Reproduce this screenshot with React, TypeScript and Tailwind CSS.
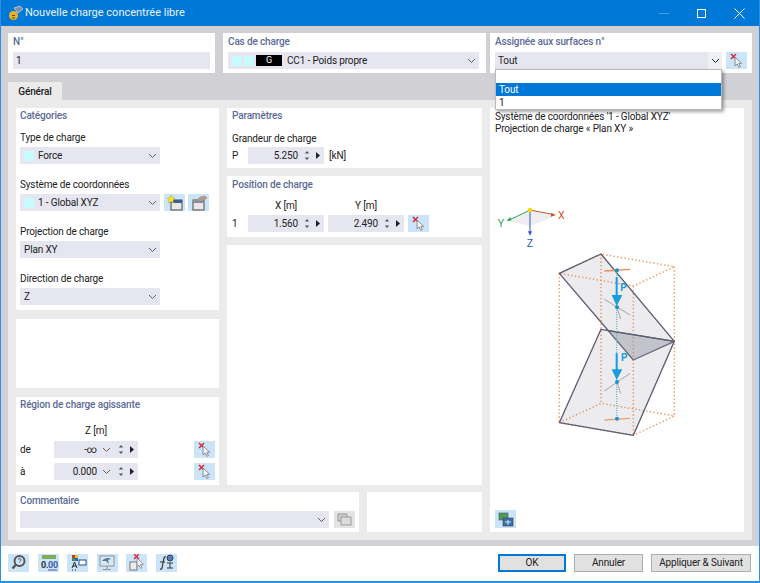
import type { ReactNode } from 'react';

const font = { fontFamily: 'Roboto, "Liberation Sans", sans-serif' };

function Chevron({ className = 'text-[#5f6068]' }: { className?: string }) {
  return (
    <svg width="9" height="6" viewBox="0 0 9 6" className={className}>
      <path d="M1 1l3.5 3.5L8 1" fill="none" stroke="currentColor" strokeWidth="1" />
    </svg>
  );
}

function Swatch() {
  return <span className="w-[10px] h-[10px] bg-[#c8fbfb] shrink-0" />;
}

function Combo({ w, children }: { w: string; children: ReactNode }) {
  return (
    <div className={`${w} h-[17px] bg-[#e6e6f0] flex items-center pl-[4px] pr-[3px] gap-[4px] text-[#222]`}>
      <div className="flex-1 flex items-center gap-[4px] min-w-0 whitespace-nowrap">{children}</div>
      <Chevron />
    </div>
  );
}

function Spin({ w, value, drop }: { w: string; value: string; drop?: boolean }) {
  return (
    <div className={`${w} h-[17px] bg-[#e6e6f0] flex items-center justify-end pr-[4px] text-[#222]`}>
      <span className={drop ? 'mr-[5px]' : 'mr-[6px]'}>{value}</span>
      {drop && <span className="mr-[7px] flex"><Chevron /></span>}
      <svg width="6" height="11" viewBox="0 0 6 11" className="mr-[6px]">
        <path d="M3 1l2.2 2.6H.8zM3 10L.8 7.4h4.4z" fill="#55565c" />
      </svg>
      <svg width="4" height="7" viewBox="0 0 4 7">
        <path d="M0 0l4 3.5L0 7z" fill="#222" />
      </svg>
    </div>
  );
}

function IconBtn({ children, muted }: { children: ReactNode; muted?: boolean }) {
  return (
    <div className={`w-[21px] h-[17px] flex items-center justify-center shrink-0 ${muted ? 'bg-[#e4e4e4]' : 'bg-[#cce4f7]'}`}>
      {children}
    </div>
  );
}

function PickIcon() {
  return (
    <svg width="16" height="16" viewBox="0 0 16 16">
      <path d="M2 1l5 5M7 1L2 6" stroke="#d8283c" strokeWidth="1.5" />
      <path d="M6 4v9l2.2-2 1.6 3.4 1.6-.8-1.6-3.2h3z" fill="#f4f4f4" stroke="#7d8590" strokeWidth=".9" />
    </svg>
  );
}

function NewCsIcon() {
  return (
    <svg width="18" height="16" viewBox="0 0 18 16">
      <rect x="5" y="5" width="11" height="10" fill="#e8e8e8" stroke="#4a4a4a" />
      <rect x="5" y="5" width="11" height="3" fill="#3a5f8c" />
      <path d="M5 0l1.2 2.6L9 3 7 5l.4 3L5 6.6 2.6 8 3 5 1 3l2.8-.4z" fill="#f6e638" stroke="#b8a81c" strokeWidth=".5" />
    </svg>
  );
}

function EditCsIcon() {
  return (
    <svg width="18" height="16" viewBox="0 0 18 16">
      <rect x="3" y="5" width="11" height="10" fill="#e8e8e8" stroke="#4a4a4a" />
      <rect x="3" y="5" width="11" height="3" fill="#8a8f98" />
      <path d="M6 6l4-4 5-1 2 2-5 3z" fill="#b79a86" stroke="#7f8ba0" strokeWidth=".6" />
    </svg>
  );
}

function Panel({ className, title, children }: { className: string; title?: string; children?: ReactNode }) {
  return (
    <section className={`bg-white ${className}`}>
      {title && <h3 className="leading-[14px] font-medium text-[#5c6b98]">{title}</h3>}
      {children}
    </section>
  );
}

function Field({ label, children }: { label: string; children: ReactNode }) {
  return (
    <div className="mb-[13px]">
      <div className="leading-[14px] pt-px mb-[2px] text-[#222]">{label}</div>
      {children}
    </div>
  );
}

function Diagram() {
  const orange = '#f0995c';
  const edge = '#5d5d72';
  return (
    <svg width="200" height="240" viewBox="0 0 600 720" className="mt-[65px] -ml-[5px]">
      <path d="M120 30L192 50 120 78 50 62z" fill="#eeeef1" />
      <path d="M120 30L192 44" stroke="#c8502c" strokeWidth="3" />
      <path d="M198 45l-16 5 2-11z" fill="#c8502c" />
      <path d="M120 30L58 60" stroke="#2fa25a" strokeWidth="3" />
      <path d="M50 64l10-13 5 10z" fill="#2fa25a" />
      <path d="M120 30V96" stroke="#2f57c4" strokeWidth="3" />
      <path d="M120 108l-6-14h12z" fill="#2f57c4" />
      <circle cx="120" cy="30" r="7" fill="#f5d90a" />
      <text x="204" y="56" fontSize="32" letterSpacing="0" fill="#d2562f">X</text>
      <text x="23" y="80" fontSize="32" letterSpacing="0" fill="#2fa25a">Y</text>
      <text x="110" y="142" fontSize="32" letterSpacing="0" fill="#2f57c4">Z</text>

      <g fill="none" stroke={orange} strokeWidth="4.5" strokeDasharray="4 7">
        <path d="M208 220L333 162 553 200 430 258z" />
        <path d="M208 668L333 610 553 648 430 706z" />
        <path d="M208 220V668M333 162V610M553 200V648M430 258V706" />
      </g>
      <path d="M208 220L333 162 553 424 430 480z" fill="#8a8a9c" fillOpacity=".16" stroke={edge} strokeWidth="4" strokeLinejoin="round" />
      <path d="M333 388L553 424 430 706 208 668z" fill="#8a8a9c" fillOpacity=".16" stroke={edge} strokeWidth="4" strokeLinejoin="round" />
      <path d="M355 392L553 424 430 480z" fill="#8a8a9c" fillOpacity=".3" />
      <path d="M355 392L553 424" stroke={edge} strokeWidth="4" />

      <path d="M380 210V656" stroke="#4fbdc6" strokeWidth="4" strokeDasharray="3 4" />
      <path d="M343 213L420 208" stroke="#e98a5c" strokeWidth="4" />
      <path d="M343 298L420 345M381 322L392 357" stroke="#a4a4ae" strokeWidth="3" />
      <path d="M343 573L420 520M381 546L392 580" stroke="#a4a4ae" strokeWidth="3" />
      <path d="M343 660L420 655" stroke="#f0a070" strokeWidth="4" />
      <path d="M380 232V292M380 460V516" stroke="#1b9be0" strokeWidth="6" />
      <path d="M365 285H397L380 318zM365 508H397L380 540z" fill="#1b9be0" />
      <g fill="#1b8ecf">
        <circle cx="381" cy="211" r="6" />
        <circle cx="381" cy="322" r="6" />
        <circle cx="381" cy="546" r="6" />
        <circle cx="381" cy="656" r="6" />
      </g>
      <text x="391" y="274" fontSize="30" fontWeight="700" letterSpacing="0" fill="#1b9be0">P</text>
      <text x="393" y="482" fontSize="30" fontWeight="700" letterSpacing="0" fill="#1b9be0">P</text>
    </svg>
  );
}

function FooterIcon({ children }: { children: ReactNode }) {
  return <div className="w-[21px] h-[18px] bg-[#cce4f7] flex items-center justify-center">{children}</div>;
}

export default function App() {
  return (
    <div style={font} className="relative w-[760px] h-[583px] flex flex-col border-x border-b-2 border-[#2b90e6] bg-white overflow-hidden text-[10px] tracking-[-0.15px] text-[#222]">
      <header className="h-[26px] shrink-0 -mx-px bg-[#0078d7] flex items-center text-white">
        <svg width="16" height="16" viewBox="0 0 16 16" className="ml-[8px]">
          <path d="M6 3l6-2 3 3-5 4z" fill="#7f8ea6" stroke="#d9e2ee" strokeWidth=".7" />
          <circle cx="5.5" cy="10.5" r="4.5" fill="#e6b422" />
          <path d="M4 10.5h3M4 13h3" stroke="#5a4410" strokeWidth="1" />
        </svg>
        <span className="ml-[1px] text-[11px] tracking-normal text-[#eaf3fb]">Nouvelle charge concentrée libre</span>
        <div className="ml-auto flex items-center">
          <span className="w-[10px] h-px bg-[#4a9fe3] mr-[28px]" />
          <span className="w-[9px] h-[9px] border border-white mr-[28px]" />
          <svg width="11" height="11" viewBox="0 0 11 11" className="mr-[15px]">
            <path d="M.5.5l10 10M10.5.5l-10 10" stroke="#fff" />
          </svg>
        </div>
      </header>

      <main className="h-[520px] shrink-0 bg-[#d1d1d5] px-[7px] pt-[7px]">
        <div className="flex h-[40px]">
          <Panel className="w-[207px] mr-[8px] px-[5px] pt-[2px]" title="N°">
            <div className="h-[17px] mt-[3px] bg-[#e6e6f0] flex items-center pl-[3px]">1</div>
          </Panel>
          <Panel className="w-[263px] mr-[4px] px-[5px] pt-[2px]" title="Cas de charge">
            <div className="mt-[3px] w-[251px] h-[17px] bg-[#e6e6f0] flex items-center pl-[4px] pr-[3px]">
              <Swatch />
              <span className="w-[10px] h-[10px] bg-[#c8fbfb] ml-[2px]" />
              <span className="w-[26px] h-[11px] bg-black text-white text-[9px] leading-[11px] text-center ml-[2px]">G</span>
              <span className="ml-[5px] flex-1">CC1 - Poids propre</span>
              <Chevron />
            </div>
          </Panel>
          <Panel className="flex-1 px-[5px] pt-[2px]" title="Assignée aux surfaces n°">
            <div className="mt-[3px] flex gap-[4px]">
              <div className="w-[227px] h-[17px] bg-[#e6e6f0] flex items-center pl-[3px]">
                <span className="flex-1">Tout</span>
                <span className="w-[14px] h-full bg-[#eef0f6] flex items-center justify-center"><Chevron className="text-[#222]" /></span>
              </div>
              <IconBtn><PickIcon /></IconBtn>
            </div>
          </Panel>
        </div>

        <div className="mt-[9px] w-[54px] h-[18px] bg-[#ebebeb] flex items-center justify-center font-medium">Général</div>

        <div className="h-[440px] bg-[#ebebeb] p-[8px] flex gap-[8px]">
          <div className="w-[466px] flex flex-col">
            <div className="h-[378px] flex gap-[8px]">
              <div className="w-[203px] flex flex-col gap-[9px]">
                <Panel className="h-[202px] px-[4px] pt-px" title="Catégories">
                  <div className="mt-[7px]">
                    <Field label="Type de charge">
                      <Combo w="w-[140px]"><Swatch />Force</Combo>
                    </Field>
                    <Field label="Système de coordonnées">
                      <div className="flex gap-[4px]">
                        <Combo w="w-[140px]"><Swatch />1 - Global XYZ</Combo>
                        <div className="flex gap-[3px]">
                          <IconBtn><NewCsIcon /></IconBtn>
                          <IconBtn><EditCsIcon /></IconBtn>
                        </div>
                      </div>
                    </Field>
                    <Field label="Projection de charge">
                      <Combo w="w-[140px]">Plan XY</Combo>
                    </Field>
                    <Field label="Direction de charge">
                      <Combo w="w-[140px]">Z</Combo>
                    </Field>
                  </div>
                </Panel>
                <Panel className="h-[69px]" />
                <Panel className="flex-1 px-[4px] pt-px" title="Région de charge agissante">
                  <div className="pl-[34px] w-[118px] text-center mt-[12px] leading-[14px]">Z [m]</div>
                  <div className="mt-[3px] flex flex-col gap-[5px]">
                    <div className="flex items-center">
                      <span className="w-[34px]">de</span>
                      <Spin w="w-[84px]" value="-∞" drop />
                      <div className="ml-auto"><IconBtn><PickIcon /></IconBtn></div>
                    </div>
                    <div className="flex items-center">
                      <span className="w-[34px]">à</span>
                      <Spin w="w-[84px]" value="0.000" drop />
                      <div className="ml-auto"><IconBtn><PickIcon /></IconBtn></div>
                    </div>
                  </div>
                </Panel>
              </div>

              <div className="flex-1 flex flex-col gap-[8px]">
                <Panel className="h-[60px] px-[5px] pt-px" title="Paramètres">
                  <div className="mt-[9px] leading-[14px]">Grandeur de charge</div>
                  <div className="mt-px flex items-center">
                    <span className="w-[16px]">P</span>
                    <Spin w="w-[76px]" value="5.250" />
                    <span className="ml-[5px]">[kN]</span>
                  </div>
                </Panel>
                <Panel className="h-[61px] px-[5px] pt-[2px]" title="Position de charge">
                  <div className="mt-[7px] flex leading-[14px] pl-[16px]">
                    <span className="w-[76px] text-center">X [m]</span>
                    <span className="w-[76px] ml-[4px] text-center">Y [m]</span>
                  </div>
                  <div className="mt-[2px] flex items-center">
                    <span className="w-[16px]">1</span>
                    <Spin w="w-[76px]" value="1.560" />
                    <span className="w-[4px]" />
                    <Spin w="w-[76px]" value="2.490" />
                    <span className="w-[4px]" />
                    <IconBtn><PickIcon /></IconBtn>
                  </div>
                </Panel>
                <Panel className="flex-1" />
              </div>
            </div>

            <div className="mt-[7px] h-[40px] flex gap-[8px]">
              <Panel className="w-[343px] px-[4px] pt-[2px]" title="Commentaire">
                <div className="mt-[3px] flex items-center gap-[5px]">
                  <Combo w="w-[309px]"> </Combo>
                  <IconBtn muted>
                    <svg width="15" height="13" viewBox="0 0 15 13">
                      <rect x="1" y="1" width="9" height="7" fill="#cfcfcf" stroke="#9a9a9a" />
                      <rect x="4" y="4" width="10" height="8" fill="#dcdcdc" stroke="#9a9a9a" />
                    </svg>
                  </IconBtn>
                </div>
              </Panel>
              <Panel className="flex-1" />
            </div>
          </div>

          <Panel className="flex-1 flex flex-col pl-[5px] pt-[3px] pb-[4px]">
            <div className="leading-[12px] text-[#222] whitespace-nowrap">
              <p>Système de coordonnées '1 - Global XYZ'</p>
              <p>Projection de charge « Plan XY »</p>
            </div>
            <Diagram />
            <div className="mt-auto w-[21px] h-[18px] bg-[#cce4f7] flex items-center justify-center">
              <svg width="16" height="15" viewBox="0 0 16 15">
                <rect x="1" y="1" width="9" height="7" fill="#4f9a58" stroke="#4b5563" strokeWidth=".6" />
                <rect x="5" y="6" width="10" height="8" fill="#3d6fa8" stroke="#36404f" strokeWidth=".6" />
                <path d="M7 10h6M10 8v5" stroke="#dce8f5" />
              </svg>
            </div>
          </Panel>
        </div>
      </main>

      <footer className="flex-1 flex items-center pl-[7px] pr-[8px] relative">
        <div className="flex gap-[8.5px] mt-[-2px]">
          <FooterIcon>
            <svg width="15" height="15" viewBox="0 0 15 15">
              <circle cx="8.5" cy="6" r="5" fill="none" stroke="#555" strokeWidth="2" />
              <path d="M5 9.5L1.5 13.5" stroke="#555" strokeWidth="2.4" />
              <path d="M7 4.5c1-1.5 3.2-.8 3 .6-.1 1-1.5 1-1.5 2.1" fill="none" stroke="#555" />
            </svg>
          </FooterIcon>
          <FooterIcon>
            <svg width="19" height="17" viewBox="0 0 19 17">
              <rect x="3" y="1" width="14" height="4" fill="#7fae5a" />
              <text x="2" y="14" fontSize="9" fontWeight="700" fill="#333">0.</text>
              <text x="9" y="14" fontSize="9" fontWeight="700" fill="#3a5fa8">00</text>
              <path d="M9 16h9" stroke="#3a5fa8" />
            </svg>
          </FooterIcon>
          <FooterIcon>
            <svg width="18" height="17" viewBox="0 0 18 17">
              <rect x="3" y="1" width="3" height="3" fill="#d8332c" />
              <rect x="6" y="1" width="3" height="3" fill="#e6c422" />
              <rect x="3" y="4" width="3" height="3" fill="#3a9a4c" />
              <rect x="6" y="4" width="3" height="3" fill="#2f62c4" />
              <path d="M3 14l2.5-6 2.5 6M4 12h3" fill="none" stroke="#222" />
              <rect x="10" y="6" width="7" height="5" fill="#fff" stroke="#2b4f88" />
              <path d="M3 16h1M6 16h1" stroke="#222" />
            </svg>
          </FooterIcon>
          <FooterIcon>
            <svg width="18" height="16" viewBox="0 0 18 16">
              <rect x="2" y="1" width="14" height="10" fill="#dfe6ee" stroke="#8d949e" />
              <path d="M4 6c2-3 7-4 9-2l-3 1 1 4-3-3z" fill="#3f7fb4" />
              <path d="M9 11v3M5 14.5h8" stroke="#8d949e" />
            </svg>
          </FooterIcon>
          <FooterIcon>
            <svg width="18" height="17" viewBox="0 0 18 17">
              <path d="M6 0l5 5M11 0L6 5" stroke="#d8283c" strokeWidth="1.4" />
              <rect x="2" y="8" width="7" height="8" fill="#eee" stroke="#777" />
              <path d="M9 4v9l2-2 1.6 3.4 1.4-.8-1.5-3.1h2.9z" fill="#f4f4f4" stroke="#7d8590" strokeWidth=".8" />
            </svg>
          </FooterIcon>
          <FooterIcon>
            <svg width="18" height="17" viewBox="0 0 18 17">
              <path d="M3 15c2 1 2-1 3-6s1-7 3-6" fill="none" stroke="#333" strokeWidth="1.2" />
              <path d="M3 8h5M10 9h6M13 9v5M10 14h6" stroke="#333" />
              <circle cx="13" cy="4" r="3" fill="#5a7fb8" stroke="#2d3f66" />
            </svg>
          </FooterIcon>
        </div>
        <div className="ml-auto flex gap-[8px] mt-[-1px]">
          <button className="w-[68px] h-[18px] bg-[#e1e1e1] border-2 border-[#0078d7] leading-none">OK</button>
          <button className="w-[69px] h-[18px] bg-[#e1e1e1] border border-[#adadad] leading-none">Annuler</button>
          <button className="w-[100px] h-[18px] bg-[#e1e1e1] border border-[#adadad] leading-none whitespace-nowrap">Appliquer &amp; Suivant</button>
        </div>
      </footer>

      <div className="absolute left-[494px] top-[69px] w-[227px] h-[41px] bg-white border border-[#b9b9b9] shadow-[2px_2px_3px_rgba(0,0,0,0.35)] flex flex-col">
        <div className="h-[13px] shrink-0" />
        <div className="h-[13px] shrink-0 bg-[#0078d7] text-white leading-[13px] pl-[3px]">Tout</div>
        <div className="h-[13px] shrink-0 leading-[13px] pl-[3px]">1</div>
      </div>
    </div>
  );
}
